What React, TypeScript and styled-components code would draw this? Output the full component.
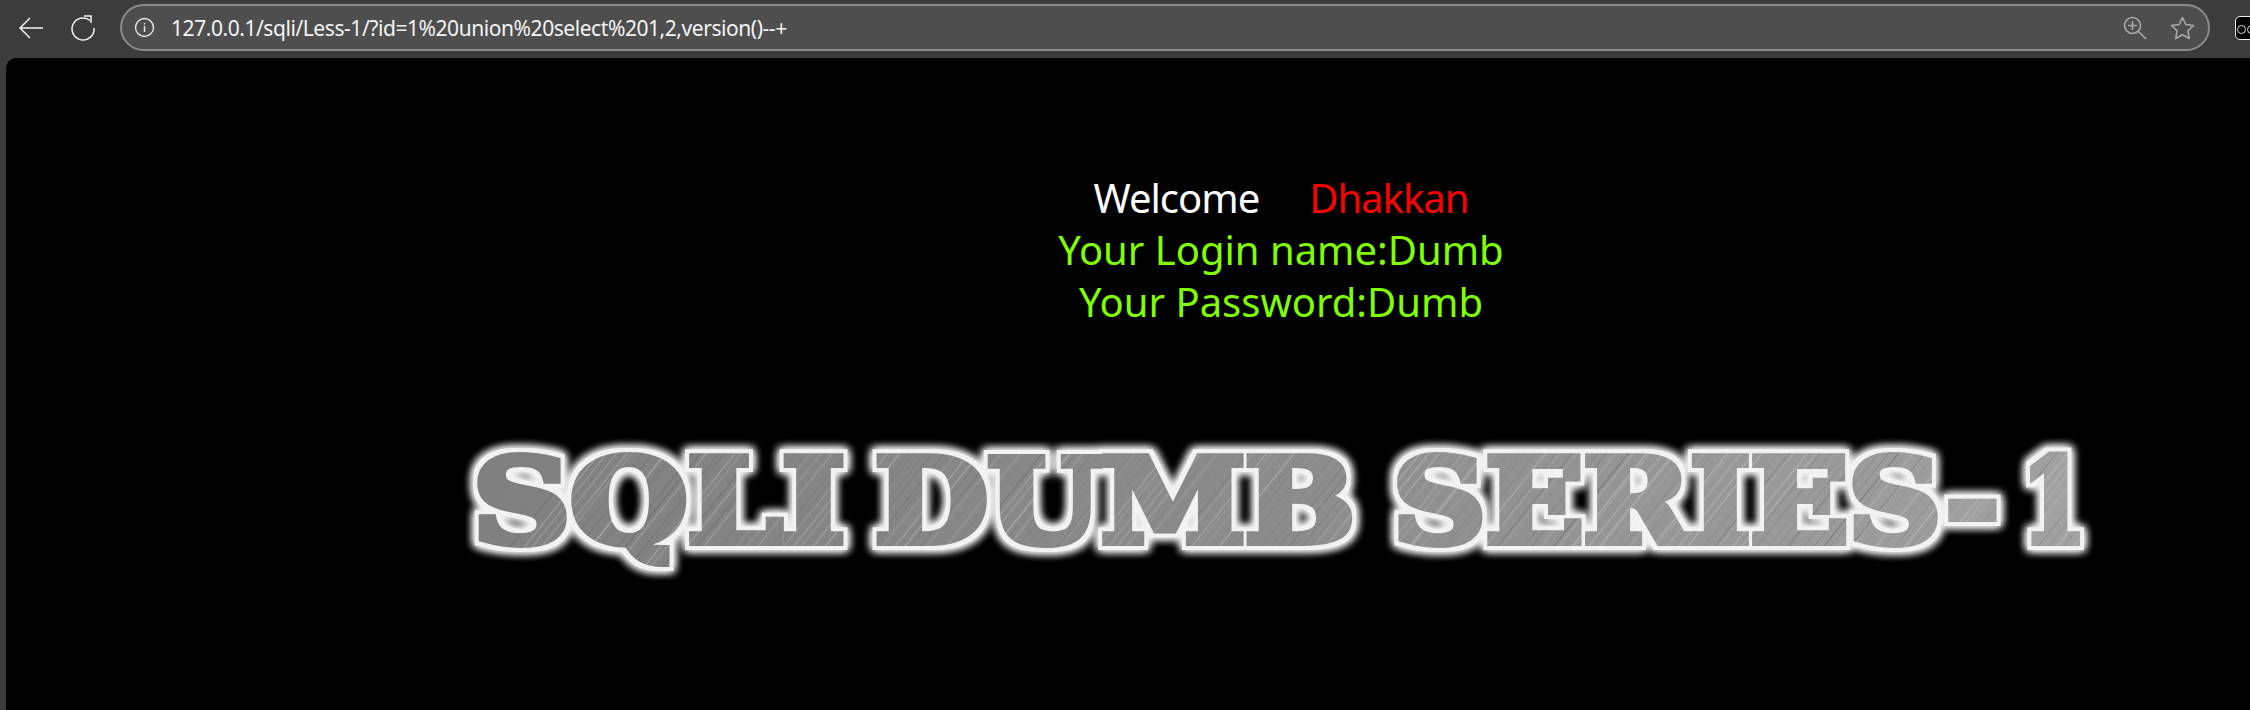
import React from 'react'
import styled, { createGlobalStyle } from 'styled-components'

const GlobalStyle = createGlobalStyle`
    html, body {
        margin: 0;
        width: 2250px;
        height: 710px;
        overflow: hidden;
        background: #3c3c3c;
    }
`
const Window = styled.div`
    width: 2250px;
    height: 710px;
    overflow: hidden;
    font-family: "Noto Sans", "Open Sans", sans-serif;
`
const Toolbar = styled.div`
    height: 58px;
    box-sizing: border-box;
    padding: 4px 0 7px 17px;
    display: flex;
    align-items: center;
    background: #3c3c3c;
`
const NavButton = styled.div<{ $gap: number }>`
    width: 28px;
    height: 28px;
    margin-right: ${p => p.$gap}px;
    display: flex;
    align-items: center;
    justify-content: center;
    flex-shrink: 0;
`
const AddressBar = styled.div`
    width: 2090px;
    height: 47px;
    box-sizing: border-box;
    padding: 0 13px 0 12px;
    display: flex;
    align-items: center;
    flex-shrink: 0;
    border: 2px solid #8b8b8b;
    border-radius: 24px;
    background: #4e4e4e;
`
const Url = styled.div`
    margin-left: 16px;
    flex: 1;
    color: #f4f4f4;
    font-size: 21px;
    letter-spacing: -0.44px;
    white-space: nowrap;
`
const BarIcons = styled.div`
    display: flex;
    align-items: center;
    gap: 23px;
`
const ExtensionBadge = styled.div`
    width: 30px;
    height: 24px;
    margin-left: 25px;
    box-sizing: border-box;
    padding: 8px 0 0 1px;
    display: flex;
    gap: 1px;
    flex-shrink: 0;
    border: 1px solid #eee;
    border-radius: 5px;
    background: #000;
`
const Dot = styled.span`
    width: 9px;
    height: 9px;
    box-sizing: border-box;
    border: 1px solid #ddd;
    border-radius: 50%;
    flex-shrink: 0;
`
const Page = styled.div`
    height: 652px;
    margin-left: 6px;
    overflow: hidden;
    border-top-left-radius: 10px;
    background: #000;
`
const Content = styled.div`
    width: 2550px;
    padding-top: 114px;
    display: flex;
    flex-direction: column;
    align-items: center;
`
const Message = styled.div`
    font-size: 40px;
    line-height: 52px;
    text-align: center;
    white-space: nowrap;
`
const Line = styled.div<{ $color: string; $tight?: boolean }>`
    color: ${p => p.$color};
    letter-spacing: ${p => (p.$tight ? '-1px' : '0')};
`
const Name = styled.span`
    margin-left: 50px;
    color: #ff0000;
`
const Banner = styled.svg`
    display: block;
    margin-top: 109px;
`
const BannerText = styled.text`
    font-family: "DejaVu Serif", "Liberation Serif", serif;
    font-weight: 700;
    font-size: 116px;
    fill: url(#brushed);
    stroke: url(#brushed);
    stroke-width: 8px;
    stroke-linejoin: miter;
`

const words = [
    { text: 'SQLI', x: 12, width: 372 },
    { text: 'DUMB', x: 414, width: 480 },
    { text: 'SERIES-', x: 932, width: 606 },
    { text: '1', x: 1561, width: 64 },
]

// brushed metal streaks of the banner, pseudo random so they don't look like stripes
const streaks = Array.from({ length: 190 }, (_, i) => {
    const a = Math.sin(i * 12.9898) * 43758.5453
    const r = a - Math.floor(a)
    const b = Math.sin(i * 78.233) * 12543.123
    const q = b - Math.floor(b)
    return {
        x: i * 9 + r * 8,
        width: 0.6 + q * 1.4,
        color: q > 0.5 ? '#c4c4c4' : '#5c5c5c',
        opacity: 0.15 + r * 0.3,
    }
})

const App: React.FC = () => {
    return (
        <Window>
            <GlobalStyle />
            <Toolbar>
                <NavButton $gap={24}>
                    <svg width="26" height="24" viewBox="0 0 26 24" fill="none" stroke="#f2f2f2" strokeWidth="1.5">
                        <path d="M25 12H2M12 2 2 12l10 10" />
                    </svg>
                </NavButton>
                <NavButton $gap={23}>
                    <svg width="28" height="26" viewBox="0 0 28 26" fill="none" stroke="#f2f2f2" strokeWidth="1.5">
                        <path d="M21 5.5A11 11 0 1 0 25 13" />
                        <path d="M15 1h7v7" />
                    </svg>
                </NavButton>
                <AddressBar>
                    <svg width="21" height="21" viewBox="0 0 21 21" fill="none" stroke="#e8e8e8" strokeWidth="1.4">
                        <circle cx="10.5" cy="10.5" r="9" />
                        <path d="M10.5 9v6M10.5 6v1.6" />
                    </svg>
                    <Url>127.0.0.1/sqli/Less-1/?id=1%20union%20select%201,2,version()--+</Url>
                    <BarIcons>
                        <svg width="24" height="24" viewBox="0 0 24 24" fill="none" stroke="#a8a8a8" strokeWidth="1.6">
                            <circle cx="9.5" cy="9.5" r="8" />
                            <path d="M9.5 5v9M5 9.5h9M15.5 15.5 23 23" />
                        </svg>
                        <svg width="25" height="24" viewBox="0 0 25 24" fill="none" stroke="#a8a8a8" strokeWidth="1.6" strokeLinejoin="round">
                            <path d="m12.5 1.5 3.3 7 7.7 1-5.6 5.3 1.4 7.7-6.8-3.7-6.8 3.7 1.4-7.7L1.5 9.5l7.7-1z" />
                        </svg>
                    </BarIcons>
                </AddressBar>
                <ExtensionBadge>
                    <Dot />
                    <Dot />
                    <Dot />
                </ExtensionBadge>
            </Toolbar>
            <Page>
                <Content>
                    <Message>
                        <Line $color="#ffffff" $tight>Welcome<Name>Dhakkan</Name></Line>
                        <Line $color="#7fff00">Your Login name:Dumb</Line>
                        <Line $color="#7fff00">Your Password:Dumb</Line>
                    </Message>
                    <Banner width="1640" height="150" viewBox="0 0 1640 150">
                        <defs>
                            <linearGradient id="metal" x1="0" x2="1640" y1="0" y2="0" gradientUnits="userSpaceOnUse">
                                <stop offset="0" stopColor="#808080" />
                                <stop offset="0.5" stopColor="#8c8c8c" />
                                <stop offset="1" stopColor="#a2a2a2" />
                            </linearGradient>
                            <pattern id="brushed" width="1640" height="150" patternUnits="userSpaceOnUse">
                                <rect width="1640" height="150" fill="url(#metal)" />
                                {streaks.map((s, i) => (
                                    <path
                                        key={i}
                                        d={`M${s.x} 150 l120 -150`}
                                        stroke={s.color}
                                        strokeWidth={s.width}
                                        strokeOpacity={s.opacity}
                                    />
                                ))}
                            </pattern>
                            <filter id="glow" x="-3%" y="-20%" width="106%" height="140%" colorInterpolationFilters="sRGB">
                                <feMorphology in="SourceAlpha" operator="dilate" radius="3.5" result="edge" />
                                <feFlood floodColor="#f2f2f2" />
                                <feComposite in2="edge" operator="in" result="outline" />
                                <feGaussianBlur in="outline" stdDeviation="5" result="blur" />
                                <feMerge>
                                    <feMergeNode in="blur" />
                                    <feMergeNode in="blur" />
                                    <feMergeNode in="blur" />
                                    <feMergeNode in="outline" />
                                    <feMergeNode in="SourceGraphic" />
                                </feMerge>
                            </filter>
                        </defs>
                        <g filter="url(#glow)">
                            {words.map(w => (
                                <BannerText
                                    key={w.text}
                                    x={w.x}
                                    y="105"
                                    textLength={w.width}
                                    lengthAdjust="spacingAndGlyphs"
                                >
                                    {w.text}
                                </BannerText>
                            ))}
                        </g>
                    </Banner>
                </Content>
            </Page>
        </Window>
    )
}

export default App
